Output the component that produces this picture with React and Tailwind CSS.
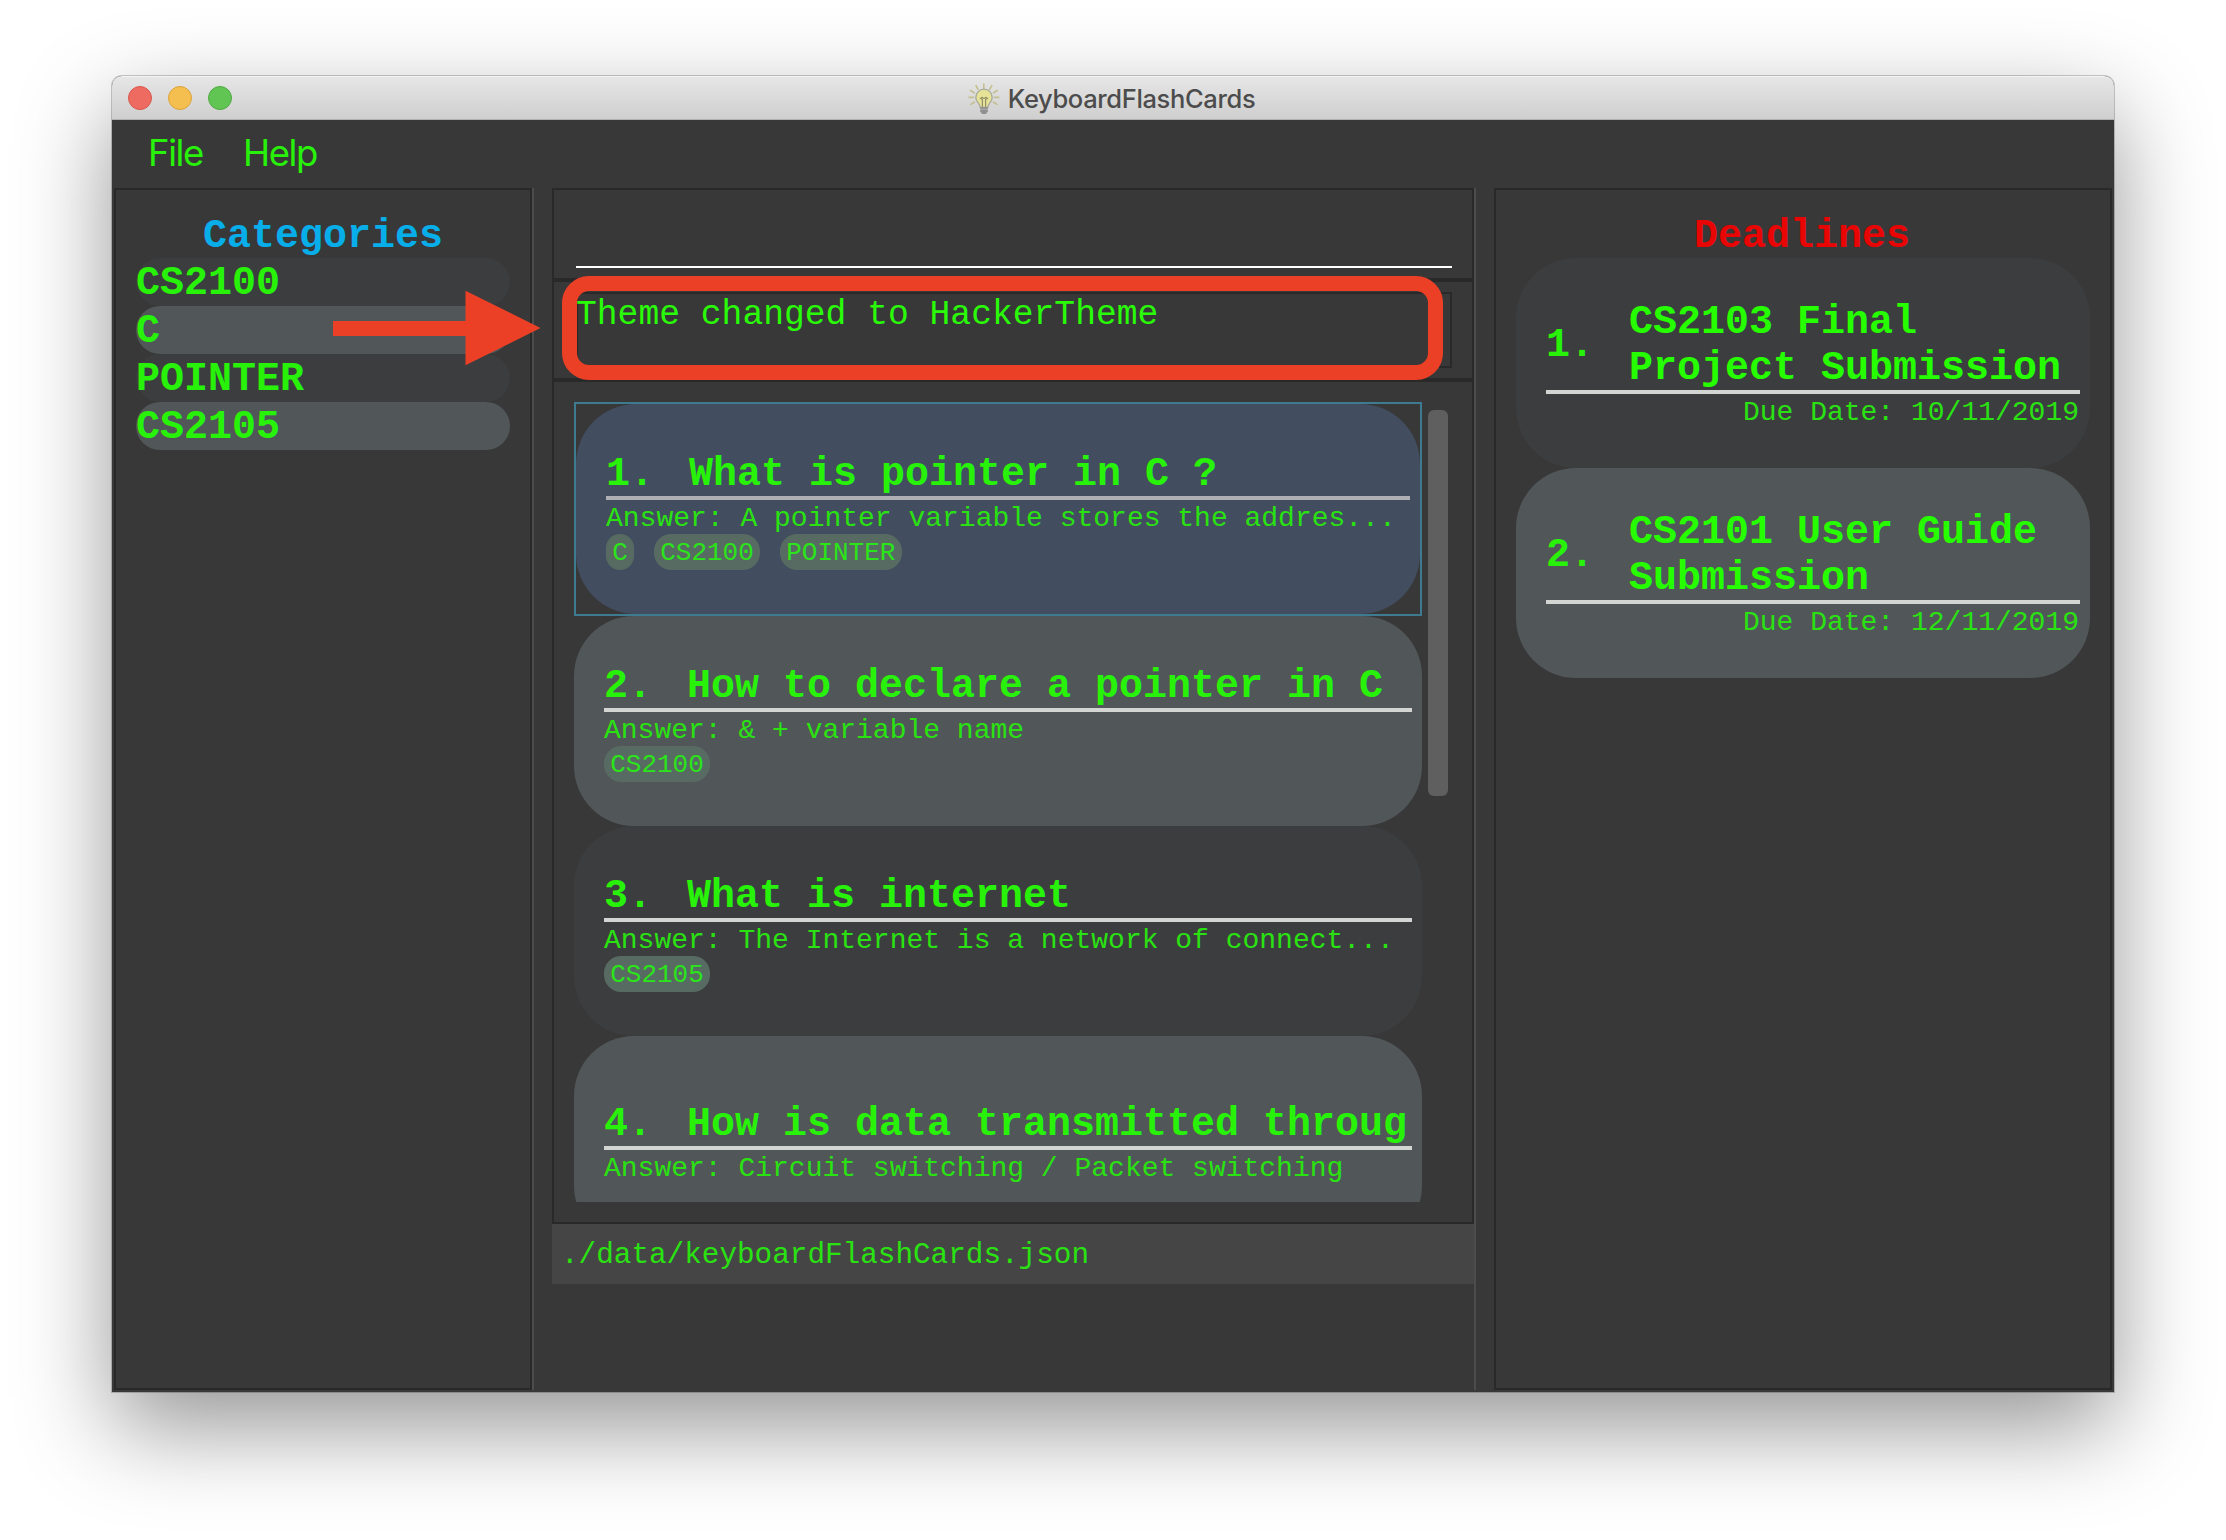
const MONO = "font-['Liberation_Mono',monospace]";

const categories = ["CS2100", "C", "POINTER", "CS2105"];

const flashcards = [
  { n: "1.", q: "What is pointer in C ?", a: "A pointer variable stores the addres...", tags: ["C", "CS2100", "POINTER"] },
  { n: "2.", q: "How to declare a pointer in C", a: "& + variable name", tags: ["CS2100"] },
  { n: "3.", q: "What is internet", a: "The Internet is a network of connect...", tags: ["CS2105"] },
  { n: "4.", q: "How is data transmitted throug", a: "Circuit switching / Packet switching", tags: [] },
];

const deadlines = [
  { n: "1.", lines: ["CS2103 Final", "Project Submission"], due: "10/11/2019" },
  { n: "2.", lines: ["CS2101 User Guide", "Submission"], due: "12/11/2019" },
];

function BulbIcon() {
  return (
    <svg className="h-8 w-8" viewBox="0 0 32 32" fill="none">
      <g stroke="#c3bf8e" strokeWidth="1.6" strokeLinecap="round">
        <path d="M15.8 1v4.2M8 2.6l2 3.8M23.8 2.6l-2.200 3.800M2.400 7.400l3.800 2.400M29.400 7.400l-3.800 2.400M1 14.400h4.400M26.400 14.400h4.400M2.600 21.400l3.800-2.200M29.200 21.400l-3.800-2.200" />
      </g>
      <path d="M16 6.200a8.200 8.200 0 0 0-8.200 8.200c0 4.600 4 5.600 4.400 10h7.600c.4-4.400 4.400-5.400 4.400-10A8.200 8.200 0 0 0 16 6.200z" fill="#e6e296" stroke="#a9a99c" strokeWidth="1.300" />
      <path d="M14.400 24v-7.400l-1.800-1.400 1.400-.8 2 1 2-1 1.400.8-1.800 1.400V24" stroke="#8d8a6a" strokeWidth="1.100" />
      <path d="M12.200 24.200h7.600v4.200l-2 2.600h-3.600l-2-2.600z" fill="#8f8f8f" />
      <path d="M12.200 26.300h7.600" stroke="#b5b5b5" strokeWidth=".8" />
    </svg>
  );
}

function TitleBar() {
  return (
    <div className="relative flex h-11 items-center justify-center rounded-t-[10px] border-t border-b border-t-[#f4f4f4] border-b-[#b0b0b0] bg-linear-to-b from-[#e6e6e6] to-[#cfcfcf]">
      <div className="absolute left-4 flex gap-4">
        <span className="h-6 w-6 rounded-full border border-[#d9584c] bg-[#ed6b60]" />
        <span className="h-6 w-6 rounded-full border border-[#dba33d] bg-[#f5bf4f]" />
        <span className="h-6 w-6 rounded-full border border-[#50aa43] bg-[#61c554]" />
      </div>
      <div className="flex items-center gap-2 pt-0.5 pr-[3px]">
        <BulbIcon />
        <span className="font-['Inter',sans-serif] text-[25.5px] leading-8 font-medium tracking-[-0.35px] text-[#4c4c4c]">KeyboardFlashCards</span>
      </div>
    </div>
  );
}

function Heading({ children, tone }) {
  return <h2 className={`h-[68px] pt-[22px] text-center text-[40px] leading-[49px] font-bold ${tone}`}>{children}</h2>;
}

function Categories() {
  return (
    <section className="w-[418px] border-2 border-[#292929] px-5">
      <Heading tone="text-[#08aeea]">Categories</Heading>
      <ul>
        {categories.map((c, i) => (
          <li key={c} className={`h-12 rounded-full text-[40px] leading-[52px] font-bold text-[#28f20a] ${i % 2 ? "bg-[#515658]" : "bg-[#3c3d3f]"}`}>
            {c}
          </li>
        ))}
      </ul>
    </section>
  );
}

function Flashcard({ card, index }) {
  const selected = index === 0;
  const last = index === 3;
  return (
    <div className={selected ? "h-[214px] shrink-0 border-2 border-[#3f7b90]" : "h-[210px] shrink-0"}>
      <div
        className={`h-[210px] rounded-[60px] pr-[10px] pl-[30px] ${last ? "pt-16" : "pt-[46px]"} ${
          selected ? "bg-[#424d5f]" : index % 2 ? "bg-[#515658]" : "bg-[#3c3d3f]"
        }`}
      >
        <div className="flex h-[46px] text-[40px] leading-[49px] font-bold whitespace-nowrap text-[#28f20a]">
          <span className="w-[83px] shrink-0">{card.n}</span>
          <span>{card.q}</span>
        </div>
        <div className={`h-1 ${selected ? "bg-[#adafb3]" : "bg-[#d3d5d3]"}`} />
        <p className="h-[34px] text-[28px] leading-[38px] whitespace-nowrap text-[#2ae212]">Answer: {card.a}</p>
        <div className="flex gap-5">
          {card.tags.map((t) => (
            <span key={t} className="h-9 rounded-[17px] bg-[#576b62] px-[6.200px] text-[26px] leading-[38px] text-[#2be41a]">
              {t}
            </span>
          ))}
        </div>
      </div>
    </div>
  );
}

function Center() {
  return (
    <section className="flex w-[922px] flex-col">
      <div className="h-[92px] border-2 border-[#292929] px-[22px] pt-[76px]">
        <div className="h-0.5 w-[876px] bg-white" />
      </div>
      <div className="relative h-[100px] border-2 border-[#292929] px-[22px] py-[10px]">
        <div className="h-[76px] w-[876px] border-2 border-[#292929] text-[34.670px] leading-[42px] text-[#29fb08]">
          <span className="-ml-0.5">Theme changed to HackerTheme</span>
        </div>
        <div className="absolute -top-[6px] left-2 h-[104px] w-[881px] rounded-[27px] border-[15px] border-[#ec4026]" />
      </div>
      <div className="flex h-[844px] gap-1.5 border-2 border-[#292929] pt-5 pl-5">
        <div className="flex h-[800px] w-[848px] flex-col overflow-hidden">
          {flashcards.map((c, i) => (
            <Flashcard key={c.n} card={c} index={i} />
          ))}
        </div>
        <div className="mt-2 h-[386px] w-5 rounded-md bg-[#5f5f5f]" />
      </div>
      <div className="h-[60px] bg-[#454545] pl-[9px] text-[29.330px] leading-[64px] text-[#2ae212]">./data/keyboardFlashCards.json</div>
    </section>
  );
}

function Deadlines() {
  return (
    <section className="w-[618px] border-2 border-[#292929] px-5">
      <Heading tone="pr-0.5 text-[#ea0505]">Deadlines</Heading>
      {deadlines.map((d, i) => (
        <div key={d.n} className={`h-[210px] rounded-[60px] pt-10 pr-[10px] pl-[30px] ${i % 2 ? "bg-[#515658]" : "bg-[#3c3d3f]"}`}>
          <div className="flex h-[92px] items-center text-[40px] leading-[46px] font-bold">
            <span className="w-[83px] shrink-0 pt-1 text-[#28f20a]">{d.n}</span>
            <div className="pt-[3px] whitespace-nowrap text-[#26ff00]">
              {d.lines.map((l) => (
                <div key={l}>{l}</div>
              ))}
            </div>
          </div>
          <div className="h-1 bg-[#d3d5d3]" />
          <p className="pr-px text-right text-[28px] leading-[38px] text-[#2ae212]">Due Date: {d.due}</p>
        </div>
      ))}
    </section>
  );
}

function Divider() {
  return <div className="mr-[18px] w-0.5 bg-[#4c4c4c]" />;
}

export default function App() {
  return (
    <div className={`h-[1540px] w-[2226px] overflow-hidden bg-white pt-[76px] pl-28 ${MONO}`}>
      <div className="relative h-[1316px] w-[2002px] rounded-t-[10px] bg-[#383838] shadow-[0_0_0_1px_rgba(0,0,0,0.2),0_35px_94px_rgba(0,0,0,0.42)]">
        <TitleBar />
        <nav className="flex h-[68px] items-center gap-10 pb-0.5 pl-9 font-['Inter',sans-serif] text-[36.500px] tracking-[-1.4px] text-[#28f20a]">
          <span>File</span>
          <span>Help</span>
        </nav>
        <main className="flex h-[1204px] px-0.5 pb-0.5">
          <Categories />
          <Divider />
          <Center />
          <Divider />
          <Deadlines />
        </main>
        <svg className="absolute top-[214px] left-[221px] h-[76px] w-[208px]" viewBox="0 0 208 76">
          <path d="M0 31h132.500V.7L207.500 38l-75 37.300V46H0z" fill="#ec4026" />
        </svg>
      </div>
    </div>
  );
}
